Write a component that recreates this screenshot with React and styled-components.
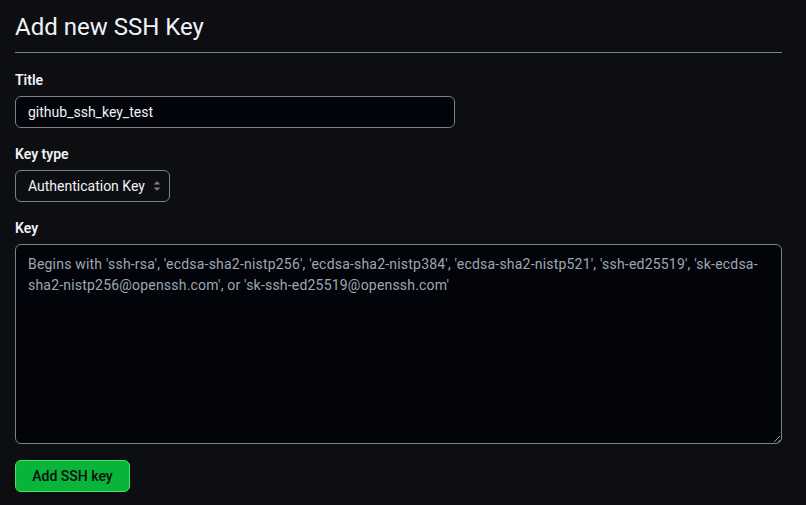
import React from "react";
import styled, { createGlobalStyle } from "styled-components";

const GlobalStyle = createGlobalStyle`
  html, body {
    margin: 0;
    padding: 0;
    background: #0d0e12;
  }
  body {
    font-family: Roboto, "Noto Sans", "Liberation Sans", sans-serif;
    color: #f0f3f6;
  }
`;

const App = () => {
  return (
    <Page>
      <GlobalStyle />
      <Header>
        <Heading>Add new SSH Key</Heading>
      </Header>
      <Form>
        <Field>
          <Label htmlFor="title">Title</Label>
          <TextInput id="title" defaultValue="github_ssh_key_test" />
        </Field>
        <Field>
          <Label htmlFor="type">Key type</Label>
          <SelectWrap>
            <Select id="type" defaultValue="auth">
              <option value="auth">Authentication Key</option>
              <option value="sign">Signing Key</option>
            </Select>
            <Caret viewBox="0 0 16 16" width="16" height="16">
              <path d="M4.6 6.6 8 3.2l3.4 3.4z" fill="#7a828e" />
              <path d="M4.6 9.4 8 12.8l3.4-3.4z" fill="#7a828e" />
            </Caret>
          </SelectWrap>
        </Field>
        <Field>
          <Label htmlFor="key">Key</Label>
          <TextArea
            id="key"
            placeholder="Begins with 'ssh-rsa', 'ecdsa-sha2-nistp256', 'ecdsa-sha2-nistp384', 'ecdsa-sha2-nistp521', 'ssh-ed25519', 'sk-ecdsa-sha2-nistp256@openssh.com', or 'sk-ssh-ed25519@openssh.com'"
          />
        </Field>
        <SubmitButton type="button">Add SSH key</SubmitButton>
      </Form>
    </Page>
  );
};

export default App;

// Styled Components
const Page = styled.div`
  width: 767px;
  padding: 0 24px 0 15px;
`;

const Header = styled.div`
  padding: 13px 0 11px;
  border-bottom: 1px solid #7a828e;
`;

const Heading = styled.h2`
  margin: 0;
  font-size: 24px;
  font-weight: 400;
  line-height: 28px;
  color: #f0f3f6;
`;

const Form = styled.div`
  display: flex;
  flex-direction: column;
  align-items: flex-start;
  padding-top: 17px;
`;

const Field = styled.div`
  display: flex;
  flex-direction: column;
  align-items: flex-start;
  width: 100%;
  margin-bottom: 16px;
`;

const Label = styled.label`
  font-size: 14px;
  font-weight: 600;
  line-height: 20px;
  margin-bottom: 6px;
  color: #f0f3f6;
`;

const TextInput = styled.input`
  box-sizing: border-box;
  width: 440px;
  height: 32px;
  padding: 0 12px;
  font-family: inherit;
  font-size: 14px;
  color: #f0f3f6;
  background: #02040a;
  border: 1px solid #7a828e;
  border-radius: 6px;
  outline: none;
`;

const SelectWrap = styled.div`
  position: relative;
  display: inline-flex;
`;

const Select = styled.select`
  box-sizing: border-box;
  appearance: none;
  height: 32px;
  width: 155px;
  padding: 0 24px 0 12px;
  font-family: inherit;
  font-size: 14px;
  color: #f0f3f6;
  background: #0d0e12;
  border: 1px solid #7a828e;
  border-radius: 6px;
  outline: none;
`;

const Caret = styled.svg`
  position: absolute;
  right: 5px;
  top: 8px;
  pointer-events: none;
`;

const TextArea = styled.textarea`
  box-sizing: border-box;
  width: 100%;
  height: 200px;
  padding: 9px 12px 8px;
  font-family: inherit;
  font-size: 14px;
  line-height: 21px;
  letter-spacing: 0.2px;
  color: #f0f3f6;
  background: #02040a;
  border: 1px solid #7a828e;
  border-radius: 6px;
  outline: none;
  resize: vertical;

  &::placeholder {
    color: #9ea7b3;
    opacity: 1;
  }
`;

const SubmitButton = styled.button`
  height: 32px;
  width: 115px;
  padding: 0 16px;
  font-family: inherit;
  font-size: 14px;
  font-weight: 500;
  color: #0a0c10;
  background: #09b43a;
  border: 1px solid #4ae168;
  border-radius: 6px;
  cursor: pointer;
`;
